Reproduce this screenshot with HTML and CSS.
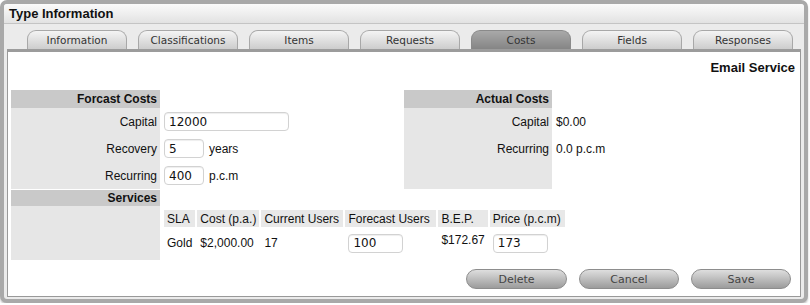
FILE: index.html
```html
<!DOCTYPE html>
<html lang="en">
<head>
    <meta charset="UTF-8">
    <title>Type Information</title>
    <link rel="stylesheet" href="styles.css">
</head>
<body>
    <div class="window">
        <div class="title-bar">Type Information</div>
        <div class="tabs">
            <div class="tab">Information</div>
            <div class="tab">Classifications</div>
            <div class="tab">Items</div>
            <div class="tab">Requests</div>
            <div class="tab active">Costs</div>
            <div class="tab">Fields</div>
            <div class="tab">Responses</div>
        </div>
        <div class="panel">
            <div class="entity-name">Email Service</div>
            <div class="cost-grid">
                <div class="cell head">Forcast Costs</div>
                <div class="cell"></div>
                <div class="cell head">Actual Costs</div>
                <div class="cell"></div>

                <div class="cell label">Capital</div>
                <div class="cell value"><input type="text" class="field wide" value="12000"></div>
                <div class="cell label">Capital</div>
                <div class="cell value">$0.00</div>

                <div class="cell label">Recovery</div>
                <div class="cell value"><input type="text" class="field short" value="5"> years</div>
                <div class="cell label">Recurring</div>
                <div class="cell value">0.0 p.c.m</div>

                <div class="cell label">Recurring</div>
                <div class="cell value"><input type="text" class="field short" value="400"> p.c.m</div>
                <div class="cell label"></div>
                <div class="cell"></div>

                <div class="cell head services-head">Services</div>
                <div class="cell services-head-rest"></div>

                <div class="cell label services-body"></div>
                <div class="cell services">
                    <table class="service-table">
                        <tr>
                            <th class="c-sla">SLA</th>
                            <th class="c-cost">Cost (p.a.)</th>
                            <th class="c-users">Current Users</th>
                            <th class="c-forecast">Forecast Users</th>
                            <th class="c-bep">B.E.P.</th>
                            <th class="c-price">Price (p.c.m)</th>
                        </tr>
                        <tr>
                            <td>Gold</td>
                            <td>$2,000.00</td>
                            <td>17</td>
                            <td><input type="text" class="field svc" value="100"></td>
                            <td class="top">$172.67</td>
                            <td><input type="text" class="field svc" value="173"></td>
                        </tr>
                    </table>
                </div>
            </div>
            <div class="buttons">
                <button class="btn delete">Delete</button>
                <button class="btn">Cancel</button>
                <button class="btn">Save</button>
            </div>
        </div>
    </div>
</body>
</html>
```

FILE: styles.css
```css
body {
    margin: 0;
    background-color: #fff;
    font-family: "Liberation Sans", Arial, sans-serif;
    font-size: 12px;
    color: #111;
}

.window {
    width: 800px;
    height: 295px;
    border: 4px solid #a9a9a9;
    border-radius: 7px;
    background-color: #ebebeb;
    box-shadow: 0 2px 2px #c8c8c8;
}

.title-bar {
    height: 19px;
    line-height: 19px;
    padding-left: 5px;
    border-bottom: 1px solid #c4c4c4;
    background: linear-gradient(#fbfbfb, #e2e2e2);
    font-weight: bold;
    font-size: 13px;
    color: #111;
    border-radius: 3px 3px 0 0;
}

.tabs {
    display: flex;
    gap: 11px;
    height: 25px;
    box-sizing: border-box;
    padding: 6px 0 0 23px;
}

.tab {
    width: 100px;
    height: 19px;
    box-sizing: border-box;
    border: 1px solid #a8a8a8;
    border-bottom: none;
    border-radius: 9px 9px 0 0;
    background: linear-gradient(#f4f4f4, #cdcdcd);
    font-family: "DejaVu Sans", Verdana, sans-serif;
    font-size: 10.5px;
    line-height: 19px;
    text-align: center;
    color: #333;
}

.tab.active {
    background: linear-gradient(#a9a9a9, #858585);
    border-color: #8a8a8a;
}

.panel {
    margin: 0 3px;
    height: 248px;
    box-sizing: border-box;
    border: 1px solid #999;
    border-top: 3px solid #9c9c9c;
    background-color: #fff;
    padding: 0 0 0 3px;
}

.entity-name {
    height: 38px;
    line-height: 32px;
    text-align: right;
    padding-right: 5px;
    font-weight: bold;
    font-size: 13px;
}

.cost-grid {
    display: grid;
    grid-template-columns: 149px 244px 148px 244px;
    grid-template-rows: 18px 27px 27px 27px 17px 54px;
}

.cell {
    display: flex;
    align-items: center;
}

.head {
    background-color: #c9c9c9;
    justify-content: flex-end;
    padding-right: 3px;
    font-weight: bold;
    font-size: 12px;
}

.label {
    background-color: #e6e6e6;
    justify-content: flex-end;
    padding-right: 3px;
}

.value {
    padding-left: 4px;
    gap: 5px;
}

.services-head {
    margin-top: 1px;
}

.services-head-rest {
    grid-column: span 3;
}

.services {
    grid-column: span 3;
    align-items: flex-start;
    padding: 2px 0 0 2px;
}

.field {
    height: 19px;
    box-sizing: border-box;
    border: 1px solid #d2d2d2;
    border-radius: 4px;
    padding: 0 4px;
    font-family: "DejaVu Sans", Verdana, sans-serif;
    font-size: 12px;
    color: #111;
    box-shadow: inset 0 1px 1px #eee;
}

.field.wide {
    width: 125px;
}

.field.short {
    width: 40px;
}

.field.svc {
    width: 55px;
}

.service-table {
    border-spacing: 2px;
    font-size: 12px;
    white-space: nowrap;
}

.service-table th {
    background-color: #e8e8e8;
    font-weight: normal;
    text-align: left;
    height: 17px;
    padding: 0 3px;
}

.service-table td {
    padding: 4px 3px 0;
    height: 20px;
}

.service-table td.top {
    vertical-align: top;
    padding-top: 4px;
}

.c-sla { width: 24px; }
.c-cost { width: 55px; }
.c-users { width: 76px; }
.c-forecast { width: 85px; }
.c-bep { width: 42px; }
.c-price { width: 69px; }

.buttons {
    display: flex;
    justify-content: flex-end;
    gap: 12px;
    padding: 9px 9px 0 0;
}

.btn {
    width: 100px;
    height: 20px;
    border: 1px solid #8d8d8d;
    border-radius: 10px;
    background: linear-gradient(#dedede, #9c9c9c);
    font-family: "DejaVu Sans", Verdana, sans-serif;
    font-size: 11px;
    color: #444;
    padding: 0;
}

.btn.delete {
    width: 101px;
}
```
